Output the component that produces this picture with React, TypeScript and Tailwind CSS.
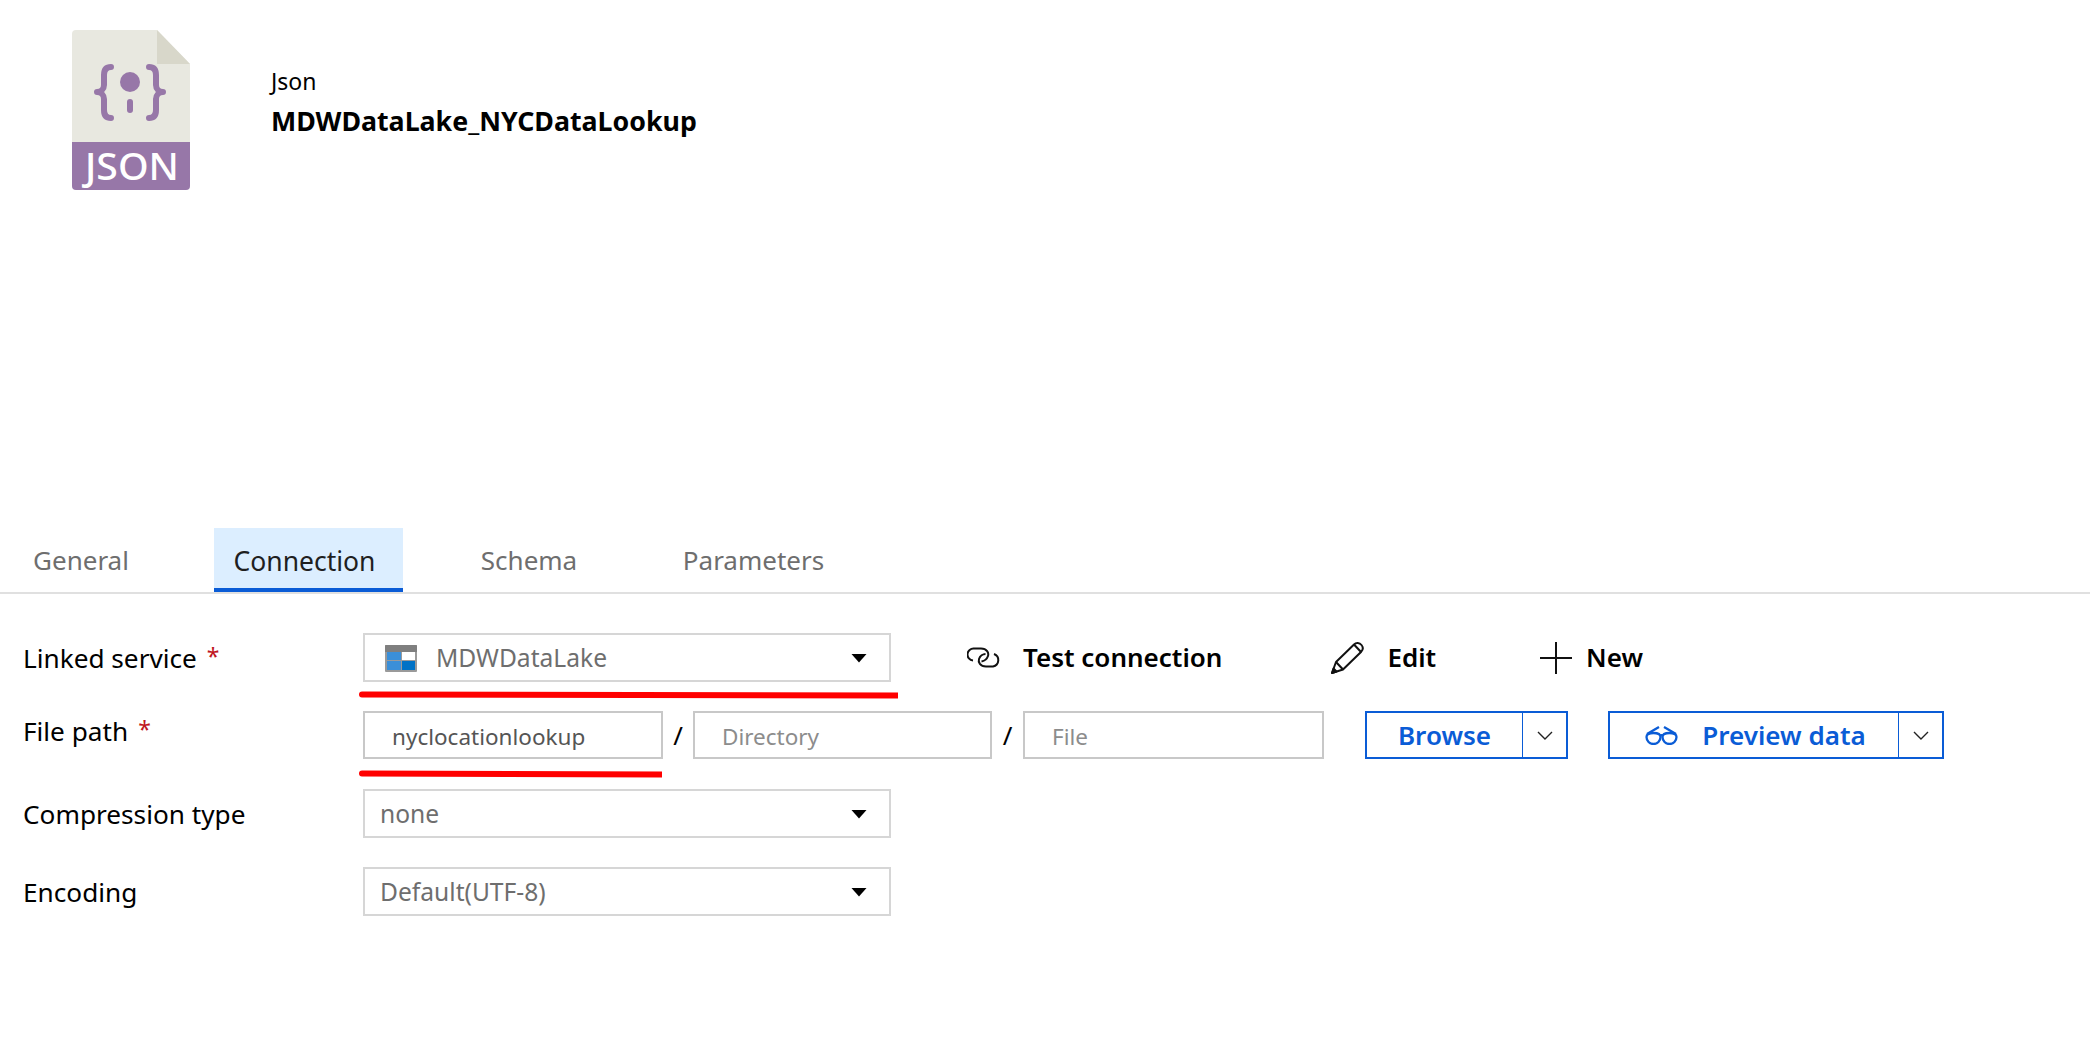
const font = { fontFamily: '"Noto Sans", sans-serif' };

function JsonLogo() {
  return (
    <svg width="118" height="160" viewBox="0 0 118 160" className="block shrink-0">
      <path d="M4 0H85L118 34V112H0V4a4 4 0 0 1 4-4Z" fill="#e8e8e0" />
      <path d="M85 0L118 34H85Z" fill="#d8d7ca" />
      <path d="M0 112H118V156a4 4 0 0 1-4 4H4a4 4 0 0 1-4-4Z" fill="#9777a8" />
      <g fill="none" stroke="#9777a8" strokeWidth="6" strokeLinecap="round" strokeLinejoin="round">
        <path d="M39 37C34 37 32 40 32 45V55C32 59 29 62 25 62C29 62 32 65 32 69V80C32 85 34 88 39 88" />
        <path d="M77 37C82 37 84 40 84 45V55C84 59 87 62 91 62C87 62 84 65 84 69V80C84 85 82 88 77 88" />
        <path d="M58 72V80" />
      </g>
      <circle cx="58" cy="52" r="10" fill="#9777a8" />
      <text x="13" y="150" fontSize="38" fontWeight="500" textLength="94" lengthAdjust="spacingAndGlyphs" fill="#fff" style={{ fontFamily: '"Noto Sans", sans-serif' }}>JSON</text>
    </svg>
  );
}

function Caret() {
  return (
    <svg width="16" height="10" viewBox="0 0 16 10" className="block shrink-0">
      <path d="M0.5 1H15.5L8 9.5Z" fill="#000" />
    </svg>
  );
}

function Select({ children }: { children: React.ReactNode }) {
  return (
    <div className="flex h-[49px] w-[528px] items-center justify-between border-2 border-[#d6d6d6] pl-[15px] pr-[22px] text-[24.6px] text-[#6e6e6e]">
      <div className="flex translate-y-px items-center">{children}</div>
      <Caret />
    </div>
  );
}

function TextInput({ width, value, placeholder }: { width: string; value?: string; placeholder?: string }) {
  return (
    <div className={`flex h-[48px] items-center border-2 border-[#c8c8c8] pt-[3px] text-[22.5px] ${width} ${value ? 'pl-[27px] text-[#555]' : 'pl-[27px] text-[#8c8c8c]'}`}>
      {value ?? placeholder}
    </div>
  );
}

function Label({ text, required, raised }: { text: string; required?: boolean; raised?: boolean }) {
  return (
    <div className={`flex w-[340px] shrink-0 items-start text-[26.2px] leading-[34px] text-black ${raised ? '-translate-y-[4px]' : ''}`}>
      {text}
      {required && <span className="ml-[10px] text-[23px] leading-[30px] text-[#c0171f]">*</span>}
    </div>
  );
}

function Tab({ text, active, className }: { text: string; active?: boolean; className: string }) {
  return (
    <div className={`flex h-[64px] items-center justify-center ${active ? 'border-b-4 border-[#0a5cd6] bg-[#dcEEFF] pr-[8px] pt-[8px] text-[26.5px] text-[#1f1f1f]' : 'text-[26px] text-[#6e6e6e]'} ${className}`}>
      {text}
    </div>
  );
}

function SplitButton({ widthMain, children }: { widthMain: string; children: React.ReactNode }) {
  return (
    <div className="flex h-[48px] border-2 border-[#0a5cd6] text-[#0a5cd6]">
      <div className={`flex items-center justify-center text-[26px] font-semibold ${widthMain}`}>{children}</div>
      <div className="flex w-[44px] items-center justify-center border-l border-[#0a5cd6]">
        <svg width="16" height="9" viewBox="0 0 16 9" fill="none" stroke="#222" strokeWidth="1.4" className="block">
          <path d="M1 1L8 8L15 1" />
        </svg>
      </div>
    </div>
  );
}

function RedLine({ width }: { width: number }) {
  return (
    <svg width={width} height="8" viewBox={`0 0 ${width} 8`} className="ml-[336px] block">
      <path d={`M3 0.5L${width} 1.500V7.500L3 6.500A3 3 0 0 1 3 0.5Z`} fill="#ff0000" />
    </svg>
  );
}

export default function App() {
  return (
    <div className="h-[1050px] w-full overflow-hidden bg-white" style={font}>
      <header className="flex h-[528px] items-start pl-[72px] pt-[30px]">
        <JsonLogo />
        <div className="ml-[81px] mt-[32px]">
          <div className="text-[23px] leading-[39px] text-black">Json</div>
          <div className="text-[26.75px] font-bold leading-[40px] text-black">MDWDataLake_NYCDataLookup</div>
        </div>
      </header>

      <nav className="flex h-[66px] border-b-2 border-[#e0e0e0]">
        <Tab text="General" className="ml-[33px] w-[96px]" />
        <Tab text="Connection" active className="ml-[85px] w-[189px]" />
        <Tab text="Schema" className="ml-[78px] w-[96px]" />
        <Tab text="Parameters" className="ml-[108px] w-[137px]" />
      </nav>

      <section className="pl-[23px] pt-[39px]">
        <div className="flex h-[49px] items-center">
          <Label text="Linked service" required />
          <Select>
            <svg width="32" height="27" viewBox="0 0 32 27" className="ml-[5px] mr-[19px] block shrink-0">
              <path d="M1 0H31a1 1 0 0 1 1 1V26a1 1 0 0 1-1 1H1a1 1 0 0 1-1-1V1a1 1 0 0 1 1-1Z" fill="#9a9a9a" />
              <path d="M0 7V1a1 1 0 0 1 1-1H31a1 1 0 0 1 1 1V7Z" fill="#7f7f7f" />
              <rect x="2" y="7" width="14" height="8" fill="#3b8fd8" />
              <rect x="17" y="7" width="13" height="8" fill="#fff" />
              <rect x="2" y="16" width="14" height="9" fill="#3b8fd8" />
              <rect x="17" y="16" width="13" height="9" fill="#0072c6" />
            </svg>
            <span>MDWDataLake</span>
          </Select>
          <div className="ml-[76px] flex items-center text-[26px] font-semibold text-black">
            <svg width="34" height="21" viewBox="0 0 34 21" fill="none" stroke="#111" strokeWidth="2" className="mr-[22px] block shrink-0">
              <path d="M6 13.500A6 6 0 0 1 7 1.500H14C20 1.500 22 6 21 9C20 12 17 14 14.500 14.500" />
              <path d="M27 7A6.500 6.500 0 0 1 26 19.500H19C13 19.500 11 15 12 12C13 9 16 7 18.500 7" />
            </svg>
            <span>Test connection</span>
          </div>
          <div className="ml-[108px] flex items-center text-[26px] font-semibold text-black">
            <svg width="34" height="34" viewBox="0 0 34 34" fill="none" stroke="#111" strokeWidth="2" strokeLinejoin="round" className="mr-[23px] block shrink-0">
              <path d="M2 32L6 21L24 3.500C26 1.500 29.500 1.500 31.500 4C33.500 6.500 33 9 31 11L13 28.500Z" />
              <path d="M24 3.500L31 11M6 21L13 28.500" />
              <path d="M2 32L3.500 27.500L6.500 30.500Z" fill="#111" />
            </svg>
            <span>Edit</span>
          </div>
          <div className="ml-[104px] flex items-center text-[26px] font-semibold text-black">
            <svg width="32" height="32" viewBox="0 0 32 32" stroke="#111" strokeWidth="2" className="mr-[14px] block shrink-0">
              <path d="M16 0V32M0 16H32" />
            </svg>
            <span>New</span>
          </div>
        </div>

        <div className="mt-[9px]">
          <RedLine width={539} />
        </div>

        <div className="mt-[12px] flex h-[48px] items-center">
          <Label text="File path" required raised />
          <TextInput width="w-[300px]" value="nyclocationlookup" />
          <span className="w-[30px] text-center text-[26px] text-black">/</span>
          <TextInput width="w-[299px]" placeholder="Directory" />
          <span className="w-[31px] text-center text-[26px] text-black">/</span>
          <TextInput width="w-[301px]" placeholder="File" />
          <div className="ml-[41px]">
            <SplitButton widthMain="w-[155px]">Browse</SplitButton>
          </div>
          <div className="ml-[40px]">
            <SplitButton widthMain="w-[288px] pl-[3px]">
              <svg width="33" height="20" viewBox="0 0 33 20" fill="none" stroke="#0a5cd6" strokeWidth="2.3" className="mr-[24px] block shrink-0">
                <path d="M1.500 12A7 7 0 0 0 15.500 12C15.500 9.500 14 8 8.500 8C3 8 1.500 9.500 1.500 12Z" />
                <path d="M17.500 12A7 7 0 0 0 31.500 12C31.500 9.500 30 8 24.500 8C19 8 17.500 9.500 17.500 12Z" />
                <path d="M2 9L14 2M31 9L19 2M15.500 11C16 10 17 10 17.500 11" />
              </svg>
              Preview data
            </SplitButton>
          </div>
        </div>

        <div className="mt-[11px]">
          <RedLine width={303} />
        </div>

        <div className="mt-[11px] flex h-[49px] items-center">
          <Label text="Compression type" />
          <Select>none</Select>
        </div>

        <div className="mt-[29px] flex h-[49px] items-center">
          <Label text="Encoding" />
          <Select>Default(UTF-8)</Select>
        </div>
      </section>
    </div>
  );
}
